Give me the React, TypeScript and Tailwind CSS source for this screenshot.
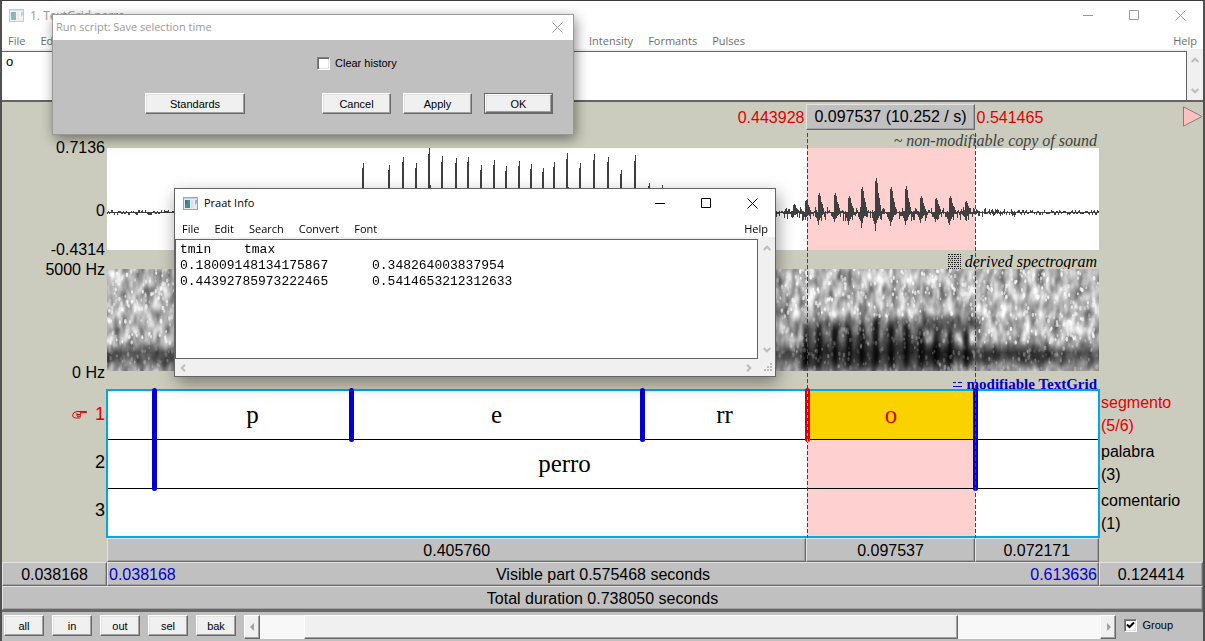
import type { ReactNode } from "react";

const random = (seed: number) => () => {
  seed = (seed * 1664525 + 1013904223) % 4294967296;
  return seed / 4294967296;
};

/* [x, height above zero, depth below zero] of each glottal pulse */
const PULSES: number[][] = [
  [255, 49, 20], [281, 47, 20], [295, 55, 22], [308, 49, 20], [321, 64, 24], [334, 56, 24],
  [348, 54, 24], [360, 55, 24], [373, 47, 20], [386, 52, 22], [398, 46, 22], [411, 51, 22],
  [423, 48, 20], [435, 44, 20], [446, 50, 20], [459, 59, 24], [472, 49, 20], [486, 58, 24],
  [500, 55, 24], [513, 42, 18], [527, 57, 22], [541, 29, 14], [554, 27, 12], [568, 24, 10],
  [686, 8, 4], [698, 12, 8], [711, 19, 14], [727, 19, 11], [741, 16, 15], [754, 25, 15],
  [768, 34, 20], [783, 25, 15], [798, 26, 14], [813, 16, 11], [828, 14, 10], [842, 16, 15], [858, 11, 8],
];

const FALL = [0.9, 1, 0.85, 0.55, 0.4, 0.2];
const SHARP_FALL = [0.9, 1, 0.42, 0.36, 0.15, 0.05];

const buildWave = () => {
  const next = random(11);
  let d = "";
  for (let x = 0; x < 992; x++) {
    const voiced = (x > 690 && x < 868) || (x > 254 && x < 580);
    const base = voiced ? 5 : x > 650 && x <= 690 ? 6 : x >= 868 && x < 920 ? 4 : 2.2;
    /* the signal swings to one side of zero at a time */
    const swing = Math.sin(x * 1.3 + Math.sin(x * 0.37) * 2);
    const size = next() * base;
    let up = swing > 0 ? size : size * 0.2;
    let down = swing > 0 ? size * 0.2 : size * (voiced ? 1.6 : 1);
    for (const [px, top, low] of PULSES) {
      const dist = x - px;
      const fall = px > 600 ? FALL : SHARP_FALL;
      if (dist >= 0 && dist < 6) {
        up = Math.max(up, top * fall[dist]);
      }
      if (dist >= -3 && dist < 7) {
        down = Math.max(down, low * Math.exp(-Math.abs(dist) / 2.4) * (0.75 + next() * 0.25));
      }
    }
    d += `M${x + 0.5} ${64 - Math.round(up)}V${65 + Math.round(down)}`;
  }
  return d;
};

const WAVE = buildWave();

const SPECKS = (() => {
  const next = random(77);
  return Array.from({ length: 2600 }, () => ({
    x: next() * 992,
    y: next() * 102,
    r: 0.8 + next() * 0.6,
    o: 0.2 + next() * 0.65,
  }));
})();

function Waveform() {
  return (
    <svg className="block h-[102px] w-full bg-white" viewBox="0 0 992 102" preserveAspectRatio="none" aria-label="Sound wave">
      <rect x="700" width="168" height="102" fill="#ffd0d0" />
      <path d={WAVE} stroke="#404040" fill="none" />
    </svg>
  );
}

function Spectrogram() {
  return (
    <svg className="block h-[102px] w-full bg-white" viewBox="0 0 992 102" preserveAspectRatio="none" aria-label="Spectrogram">
      <defs>
        <filter id="grain" x="0" y="0" width="100%" height="100%" colorInterpolationFilters="sRGB">
          <feTurbulence type="fractalNoise" baseFrequency="0.13 0.06" numOctaves="2" seed="8" />
          <feColorMatrix values="0.9 0 0 0 0.26 0.9 0 0 0 0.26 0.9 0 0 0 0.26 0 0 0 0 1" />
        </filter>
        <filter id="soft" x="-5%" y="-20%" width="110%" height="140%">
          <feGaussianBlur stdDeviation="3 5" />
        </filter>
        <filter id="pulse" x="-5%" y="-20%" width="110%" height="140%">
          <feGaussianBlur stdDeviation="1.6 5" />
        </filter>
        <filter id="speck" x="0" y="0" width="100%" height="100%">
          <feGaussianBlur stdDeviation="0.5" />
        </filter>
        <linearGradient id="band" x1="0" y1="0" x2="0" y2="1">
          <stop offset="0.7" stopOpacity="0" />
          <stop offset="0.82" stopOpacity="0.55" />
          <stop offset="0.88" stopOpacity="0.5" />
          <stop offset="1" stopOpacity="0.1" />
        </linearGradient>
      </defs>
      <rect width="992" height="102" filter="url(#grain)" />
      <rect width="992" height="102" fill="url(#band)" />
      <g filter="url(#soft)">
        <rect x="697" y="50" width="118" height="22" opacity="0.4" />
        <rect x="815" y="46" width="58" height="16" opacity="0.5" />
        <rect x="694" y="70" width="150" height="32" opacity="0.45" />
        <rect x="815" y="78" width="130" height="14" opacity="0.4" />
      </g>
      <g filter="url(#pulse)">
        {PULSES.filter(([x]) => x > 690).map(([x, top]) => (
          <rect key={x} x={x - 2} y={66 - top / 2} width="6" height={32 + top / 2} opacity="0.8" />
        ))}
      </g>
      <g filter="url(#speck)">
        {SPECKS.map((s, i) => {
          const dark = s.y > 74 || (s.x > 695 && s.x < 870 && s.y > 48);
          return <ellipse key={i} cx={s.x} cy={s.y} rx={s.r} ry={s.r * 1.8} fill="#fff" opacity={dark ? s.o * 0.35 : s.o} />;
        })}
      </g>
    </svg>
  );
}

function AppIcon({ className }: { className: string }) {
  return (
    <svg className={className} width="15" height="13" viewBox="0 0 15 13" aria-hidden="true">
      <rect x="0.5" y="0.5" width="14" height="12" fill="#e8ebed" stroke="#9aa5ab" />
      <rect x="1" y="1" width="13" height="1" fill="#c6d0d6" />
      <rect x="2" y="3" width="5" height="8" fill="#3f8f86" />
      <rect x="2" y="3" width="2" height="4" fill="#4668a8" />
      <rect x="8" y="3" width="2" height="8" fill="#dcdfe2" />
      <path d="M12 3h2v3l-2 2z" fill="#8fb8cf" />
    </svg>
  );
}

function CaptionButtons({ color }: { color: string }) {
  return (
    <div className={`flex items-center ${color}`}>
      <button aria-label="Minimize" className="flex h-7 w-[46px] items-center justify-center">
        <svg width="11" height="11" stroke="currentColor" fill="none"><path d="M0 5.5h10" /></svg>
      </button>
      <button aria-label="Maximize" className="flex h-7 w-[46px] items-center justify-center">
        <svg width="11" height="11" stroke="currentColor" fill="none"><path d="M.5.5h9v9h-9z" /></svg>
      </button>
      <CloseButton />
    </div>
  );
}

function CloseButton() {
  return (
    <button aria-label="Close" className="flex h-7 w-[46px] items-center justify-center">
      <svg width="11" height="11" stroke="currentColor" fill="none"><path d="M.5.5l10 10M10.5.5l-10 10" /></svg>
    </button>
  );
}

function Chevron({ turn }: { turn: string }) {
  return (
    <svg className={turn} width="8" height="6" viewBox="0 0 8 6" fill="none" stroke="#bdbdbd" strokeWidth="2" aria-hidden="true">
      <path d="M0.7 5L4 1.7L7.3 5" />
    </svg>
  );
}

function PushButton({ children, width, strong }: { children: ReactNode; width: string; strong?: boolean }) {
  return (
    <span className={`flex h-[21px] ${width} ${strong ? "border border-[#696969]" : ""}`}>
      <button className="flex-1 border border-t-white border-r-[#696969] border-b-[#696969] border-l-white bg-[#f0f0f0] text-center font-['Liberation_Sans',sans-serif] text-[11px] leading-4 shadow-[inset_-1px_-1px_#a0a0a0,inset_1px_1px_#e3e3e3]">
        {children}
      </button>
    </span>
  );
}

function Tick({ label, checked }: { label: string; checked?: boolean }) {
  return (
    <label className="flex items-center gap-[5px] text-[11px] leading-4">
      <span className="relative flex size-[13px]">
        <input
          type="checkbox"
          defaultChecked={checked}
          className="peer size-[13px] appearance-none border border-t-[#808080] border-r-white border-b-white border-l-[#808080] bg-white shadow-[inset_1px_1px_#696969,inset_-1px_-1px_#e3e3e3]"
        />
        <svg className="pointer-events-none absolute inset-0 hidden peer-checked:block" width="13" height="13" fill="none" stroke="#000" strokeWidth="2" aria-hidden="true">
          <path d="M3 5.5L5.5 8L10 3.5" />
        </svg>
      </span>
      {label}
    </label>
  );
}

const BAR =
  "bg-[#c0c0c0] border border-t-[#e3e3e3] border-l-[#e3e3e3] border-r-[#696969] border-b-[#696969] shadow-[inset_-1px_-1px_#a0a0a0] text-center leading-6 h-6";
const SPANS = "grid grid-cols-[405760fr_97537fr_72171fr]";

function Boundary({ className, children }: { className: string; children?: ReactNode }) {
  return <i className={`absolute -top-[3px] -ml-[2px] flex w-[5px] justify-center rounded-sm ${className}`}>{children}</i>;
}

function TextGrid() {
  const cell = "flex items-center justify-center";
  return (
    <div className="relative -mx-px border-2 border-[#00a8e8] bg-white font-['Liberation_Serif',serif] text-[25px] leading-6">
      <div className="flex h-[49px] border-b border-black">
        <div className="flex-[46_1_0%]" />
        <div className={`${cell} flex-[197_1_0%]`}>p</div>
        <div className={`${cell} flex-[291_1_0%]`}>e</div>
        <div className={`${cell} flex-[165_1_0%]`}>rr</div>
        <div className={`${cell} flex-[168_1_0%] bg-[#fad200] text-[#e00000]`}>o</div>
        <div className="flex-[123_1_0%]" />
      </div>
      <div className="flex h-[49px] border-b border-black">
        <div className="flex-[46_1_0%]" />
        <div className="grid flex-[821_1_0%] grid-cols-[653fr_168fr]">
          <div className={`${cell} col-span-2 col-start-1 row-start-1`}>
            <span className="z-10">perro</span>
          </div>
          <div className="col-start-2 row-start-1 bg-[#ffd0d0]" />
        </div>
        <div className="flex-[123_1_0%]" />
      </div>
      <div className="flex h-[47px]">
        <div className="flex-[699_1_0%]" />
        <div className="flex-[168_1_0%] bg-[#ffd0d0]" />
        <div className="flex-[123_1_0%]" />
      </div>
      <Boundary className="left-[4.65%] h-[103px] bg-[#0000d0]" />
      <Boundary className="left-[24.5%] h-[54px] bg-[#0000d0]" />
      <Boundary className="left-[53.9%] h-[54px] bg-[#0000d0]" />
      <Boundary className="left-[70.6%] z-20 h-[54px] bg-[#e00000]">
        <svg className="h-[54px] w-px" aria-hidden="true"><path d="M.5 3V54" stroke="#fad200" strokeDasharray="3 3" /></svg>
      </Boundary>
      <Boundary className="left-[87.55%] h-[103px] bg-[#0000d0]" />
    </div>
  );
}

function SelectionEdge({ className }: { className: string }) {
  return (
    <svg className={`absolute top-[3px] h-[405px] w-px ${className}`} aria-hidden="true">
      <path d="M.5 0V405" stroke="#e00000" strokeDasharray="4 2" />
    </svg>
  );
}

function Editor() {
  return (
    <div className="flex bg-[#ccccbe]">
      <div className="w-[105px] pt-9 pr-0.5 text-right leading-5">
        <div>0.7136</div>
        <div className="pt-[43px]">0</div>
        <div className="pt-[19px]">-0.4314</div>
        <div className="whitespace-nowrap">5000 Hz</div>
        <div className="pt-[83px]">0 Hz</div>
        <div className="pt-[7px] text-[18px]">
          <div className="flex h-12 items-center justify-end gap-2 text-[#e00000]">
            <svg width="15" height="9" viewBox="0 0 15 9" fill="none" stroke="currentColor" aria-hidden="true">
              <path d="M5 1.5h9.5v1.2H8M5 1.5L2 2.5Q.5 4 .7 6.5L3 8h4.5Q9 7.5 8 6.2Q9.5 5.5 8.3 4.6Q9.3 3.4 8 2.7M5 4.5h3.3M5 6.3h3M5 3v3" />
            </svg>
            1
          </div>
          <div className="flex h-12 items-center justify-end">2</div>
          <div className="flex h-12 items-center justify-end">3</div>
        </div>
      </div>

      <div className="min-w-0 flex-1">
        <div className={`${SPANS} h-7 items-start pt-0.5 leading-7`}>
          <div className="pr-0.5 text-right text-[#e00000]">0.443928</div>
          <button className="h-[26px] border border-t-[#e3e3e3] border-r-[#696969] border-b-[#696969] border-l-[#e3e3e3] bg-[#c0c0c0] leading-6 whitespace-nowrap shadow-[inset_-1px_-1px_#a0a0a0]">
            0.097537 (10.252 / s)
          </button>
          <div className="pl-0.5 text-[#e00000]">0.541465</div>
        </div>
        <div className="relative">
          <div className="flex h-[18px] items-center justify-end pt-1 pr-0.5 font-['Liberation_Serif',serif] text-[16px] leading-[18px] text-[#404040] italic">
            ~ non-modifiable copy of sound
          </div>
          <Waveform />
          <div className="flex h-[19px] items-center justify-end gap-1 pt-1 pr-0.5 font-['Liberation_Serif',serif] text-[16px] leading-[18px] italic">
            <svg width="13" height="15" stroke="#222" aria-hidden="true">
              <path strokeDasharray="2 1" d="M0 .5h13M0 4.5h13M0 8.5h13M0 12.5h13" />
              <path strokeDasharray="1 1" d="M0 2.5h13M0 6.5h13M0 10.5h13M0 14.5h13" />
            </svg>
            derived spectrogram
          </div>
          <Spectrogram />
          <div className="flex h-[18px] items-center justify-end gap-1 pt-2 pr-0.5 font-['Liberation_Serif',serif] text-[15px] leading-[18px] font-bold text-[#0000d0]">
            <svg className="mt-1" width="11" height="10" stroke="currentColor" aria-hidden="true">
              <path d="M1 1.5h3M6 1.5h4M1 5.5h9M1 8.5h3M6 8.5h4" />
            </svg>
            modifiable TextGrid
          </div>
          <TextGrid />
          <SelectionEdge className="left-[70.56%]" />
          <SelectionEdge className="left-[87.5%]" />
        </div>
      </div>

      <div className="flex w-[104px] flex-col">
        <button aria-label="Play" className="mt-1 self-end">
          <svg className="block" width="20" height="22" fill="#ffc0c0" stroke="#808080"><path d="M.5 .8V20.2L19 10.5z" /></svg>
        </button>
        <div className="mt-auto pl-0.5 leading-[23px]">
          <div className="h-[49px] text-[#e00000]">segmento<br />(5/6)</div>
          <div className="h-[49px]">palabra<br />(3)</div>
          <div className="h-[49px]">comentario<br />(1)</div>
        </div>
      </div>
    </div>
  );
}

function TimeBars() {
  return (
    <div className="border-b-2 border-[#696969] bg-[#ccccbe]">
      <div className={`${SPANS} mr-[104px] ml-[105px]`}>
        <div className={BAR}>0.405760</div>
        <div className={BAR}>0.097537</div>
        <div className={BAR}>0.072171</div>
      </div>
      <div className="flex">
        <div className={`${BAR} w-[105px]`}>0.038168</div>
        <div className={`${BAR} grid flex-1 grid-cols-3 px-px`}>
          <span className="text-left text-[#0000d0]">0.038168</span>
          <span>Visible part 0.575468 seconds</span>
          <span className="text-right text-[#0000d0]">0.613636</span>
        </div>
        <div className={`${BAR} w-[104px]`}>0.124414</div>
      </div>
      <div className={BAR}>Total duration 0.738050 seconds</div>
    </div>
  );
}

function BottomBar() {
  const arrow =
    "flex w-4 items-center justify-center border border-t-white border-l-white border-r-[#696969] border-b-[#696969] bg-[#f0f0f0] shadow-[inset_-1px_-1px_#a0a0a0]";
  return (
    <div className="flex h-7 items-start bg-[#c0c0c0] pt-[3px] pr-[30px] pl-0.5">
      <div className="flex gap-2">
        <PushButton width="w-10">all</PushButton>
        <PushButton width="w-10">in</PushButton>
        <PushButton width="w-10">out</PushButton>
        <PushButton width="w-10">sel</PushButton>
        <PushButton width="w-10">bak</PushButton>
      </div>
      <div className="mr-2 ml-2 flex h-6 flex-1 bg-[#f8f8f8]">
        <button aria-label="Scroll left" className={arrow}>
          <svg width="5" height="8" fill="#a0a0a0"><path d="M4 0v8L0 4z" /></svg>
        </button>
        <div className="flex flex-1">
          <div className="flex-[44_1_0%]" />
          <div className="flex-[652_1_0%] border border-t-white border-r-[#696969] border-b-[#696969] border-l-white bg-[#f0f0f0] shadow-[inset_-1px_-1px_#a0a0a0]" />
          <div className="flex-[143_1_0%]" />
        </div>
        <button aria-label="Scroll right" className={arrow}>
          <svg width="5" height="8" fill="#a0a0a0"><path d="M1 0v8L5 4z" /></svg>
        </button>
      </div>
      <div className="pt-0.5">
        <Tick label="Group" checked />
      </div>
    </div>
  );
}

function ScriptDialog() {
  return (
    <section className="absolute top-[13px] left-[50px] w-[522px] border border-[#999] bg-[#c0c0c0] shadow-[2px_4px_12px_rgba(0,0,0,0.45)]">
      <div className="flex h-[25px] items-center justify-between bg-white pl-[3px] font-['Open_Sans',sans-serif] text-[11px] text-[#999]">
        <span>Run script: Save selection time</span>
        <span className="flex w-[31px] justify-center"><CloseButton /></span>
      </div>
      <div className="h-[94px] pt-[15px]">
        <div className="flex pl-[264px]">
          <Tick label="Clear history" />
        </div>
        <div className="flex justify-end gap-3 pt-[22px] pr-5">
          <div className="mr-auto pl-[92px]">
            <PushButton width="w-[100px]">Standards</PushButton>
          </div>
          <PushButton width="w-[69px]">Cancel</PushButton>
          <PushButton width="w-[69px]">Apply</PushButton>
          <PushButton width="w-[69px]" strong>OK</PushButton>
        </div>
      </div>
    </section>
  );
}

const INFO = "tmin\ttmax\n0.18009148134175867\t0.348264003837954\n0.44392785973222465\t0.5414653212312633";

function InfoWindow() {
  return (
    <section className="absolute top-[187px] left-[172px] w-[602px] border border-[#646464] bg-[#f0f0f0] shadow-[2px_6px_16px_rgba(0,0,0,0.4)]">
      <div className="bg-white font-['Open_Sans',sans-serif] text-[11px]">
        <div className="flex h-7 items-center pl-2">
          <AppIcon className="mr-[6px]" />
          <span className="mr-auto">Praat Info</span>
          <CaptionButtons color="text-black" />
        </div>
        <nav className="flex h-5 items-center gap-[15px] px-[7px] pt-1">
          <button>File</button>
          <button>Edit</button>
          <button>Search</button>
          <button>Convert</button>
          <button>Font</button>
          <button className="ml-auto">Help</button>
        </nav>
      </div>
      <div className="flex pt-0.5">
        <textarea
          readOnly
          wrap="off"
          aria-label="Info"
          defaultValue={INFO}
          className="block h-[120px] flex-1 resize-none overflow-hidden border border-[#646464] bg-white px-1 pt-0.5 font-['Liberation_Mono',monospace] text-[13px] leading-4 [tab-size:64px]"
        />
        <div className="flex w-[17px] flex-col items-center justify-between py-1.5">
          <Chevron turn="" />
          <Chevron turn="rotate-180" />
        </div>
      </div>
      <div className="flex h-[17px] items-center pr-0.5 pl-1">
        <Chevron turn="-rotate-90" />
        <Chevron turn="ml-auto mr-[11px] rotate-90" />
        <svg width="9" height="9" fill="#bdbdbd" aria-hidden="true">
          <path d="M6 0h2v2H6zM3 3h2v2H3zM6 3h2v2H6zM0 6h2v2H0zM3 6h2v2H3zM6 6h2v2H6z" />
        </svg>
      </div>
    </section>
  );
}

export default function App() {
  return (
    <main className="relative min-h-screen overflow-hidden border-t border-r-2 border-l-2 border-t-[#3c3c3c] border-r-[#505050] border-l-[#505050] bg-[#c0c0c0] font-['Liberation_Sans',sans-serif] text-[16px] text-black">
      <header className="bg-white font-['Open_Sans',sans-serif] text-[11px]">
        <div className="flex h-[29px] items-center pl-[7px] text-[#999]">
          <AppIcon className="mr-[6px] opacity-60" />
          <span className="mr-auto text-[12px]">1. TextGrid perro</span>
          <CaptionButtons color="text-[#999]" />
        </div>
        <nav className="flex h-[19px] items-center gap-[15px] px-1.5 pt-1 text-[#6d6d6d]">
          <div className="flex w-[566px] gap-[15px]">
            <button>File</button>
            <button>Edit</button>
            <button className="ml-auto">Pitch</button>
          </div>
          <button>Intensity</button>
          <button>Formants</button>
          <button>Pulses</button>
          <button className="ml-auto">Help</button>
        </nav>
      </header>
      <div className="flex border-b-2 border-[#646464] bg-[#f0f0f0] pt-0.5">
        <textarea
          readOnly
          aria-label="Interval text"
          defaultValue="o"
          className="block h-[49px] flex-1 resize-none overflow-hidden border-t border-r border-[#646464] bg-white px-1 pt-0.5 text-[13px] leading-4"
        />
        <div className="flex w-4 flex-col items-center justify-between py-1.5">
          <Chevron turn="" />
          <Chevron turn="rotate-180" />
        </div>
      </div>
      <Editor />
      <TimeBars />
      <BottomBar />
      <ScriptDialog />
      <InfoWindow />
    </main>
  );
}
